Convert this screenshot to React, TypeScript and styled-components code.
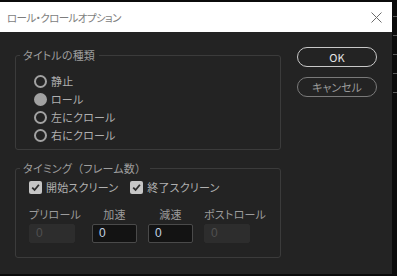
import React from 'react';
import styled, {createGlobalStyle} from "styled-components";

const GlobalStyle = createGlobalStyle`
    html, body {
        margin: 0;
        background: #0b0b0b;
    }
    body {
        font-family: "Noto Sans CJK JP", "Noto Sans", sans-serif;
        font-feature-settings: "palt";
    }
`

type InputCol = { label: string, value: string, width: number, disabled?: boolean, center?: boolean };

const radios = [
    {label: '静止', checked: false},
    {label: 'ロール', checked: true},
    {label: '左にクロール', checked: false},
    {label: '右にクロール', checked: false},
];

const inputs: InputCol[] = [
    {label: 'プリロール', value: '0', width: 63, disabled: true},
    {label: '加速', value: '0', width: 56, center: true},
    {label: '減速', value: '0', width: 56, center: true},
    {label: 'ポストロール', value: '0', width: 60, disabled: true},
];

const CheckMark = () => (
    <svg width="9" height="9" viewBox="0 0 9 9">
        <path d="M1.2 4.6 L3.6 7 L7.9 1.8" fill="none" stroke="#2b2b2b" strokeWidth="1.8"/>
    </svg>
);

export default function App() {
    return (
        <Page>
            <GlobalStyle/>
            <Dialog>
                <TitleBar>
                    <Title>ロール・クロールオプション</Title>
                    <Close>
                        <svg width="11" height="11" viewBox="0 0 11 11">
                            <path d="M0.5 0.5 L10.5 10.5 M10.5 0.5 L0.5 10.5" stroke="#6c6c6c" strokeWidth="1"/>
                        </svg>
                    </Close>
                </TitleBar>

                <Body>
                    <Groups>
                        <Group>
                            <Legend>タイトルの種類</Legend>
                            <RadioList>
                                {radios.map(r => (
                                    <RadioRow key={r.label}>
                                        <Radio $checked={r.checked}/>
                                        <OptionText>{r.label}</OptionText>
                                    </RadioRow>
                                ))}
                            </RadioList>
                        </Group>

                        <Group $timing>
                            <Legend>タイミング<Paren>（</Paren>フレーム数<Paren>）</Paren></Legend>
                            <TimingContent>
                                <CheckRow>
                                    <CheckItem>
                                        <Box><CheckMark/></Box>
                                        <OptionText>開始スクリーン</OptionText>
                                    </CheckItem>
                                    <CheckItem>
                                        <Box><CheckMark/></Box>
                                        <OptionText>終了スクリーン</OptionText>
                                    </CheckItem>
                                </CheckRow>
                                <Fields>
                                    {inputs.map(f => (
                                        <Field key={f.label} $width={f.width}>
                                            <FieldLabel $center={f.center}>{f.label}</FieldLabel>
                                            <NumberBox $disabled={f.disabled}>{f.value}</NumberBox>
                                        </Field>
                                    ))}
                                </Fields>
                            </TimingContent>
                        </Group>
                    </Groups>

                    <Buttons>
                        <Button $primary>OK</Button>
                        <Button>キャンセル</Button>
                    </Buttons>
                </Body>
            </Dialog>
            <Side>
                <Tick/><Tick/><Tick/><Tick/><Tick/>
            </Side>
        </Page>
    );
}

const Page = styled.div`
    display: flex;
    align-items: flex-start;
    width: 397px;
    height: 276px;
    overflow: hidden;
`
const Dialog = styled.div`
    width: 392px;
    height: 272px;
    margin-top: 2px;
    background: #232323;
    display: flex;
    flex-direction: column;
`
const TitleBar = styled.div`
    height: 30px;
    background: #ffffff;
    display: flex;
    align-items: center;
    justify-content: space-between;
    padding: 0 10px 0 7px;
`
const Title = styled.div`
    font-size: 10.5px;
    color: #7d7d7d;
    letter-spacing: -0.6px;
`
const Close = styled.div`
    display: flex;
    width: 11px;
    height: 11px;
`
const Body = styled.div`
    display: flex;
    gap: 16px;
    padding: 0 15px;
`
const Groups = styled.div`
    width: 266px;
    display: flex;
    flex-direction: column;
    gap: 11px;
    padding-top: 16px;
`
const Group = styled.fieldset<{ $timing?: boolean }>`
    margin: 0;
    border: 1px solid #3b3b3b;
    border-radius: 3px;
    padding: ${p => p.$timing ? '5px 0 14px 0' : '10px 0 5px 0'};
    min-width: 0;
`
const Legend = styled.legend`
    margin-left: 4px;
    padding: 0 4px 0 3px;
    font-size: 11px;
    line-height: 14px;
    color: #9e9e9e;
    letter-spacing: 0.2px;
`
const Paren = styled.span`
    font-feature-settings: normal;
`
const RadioList = styled.div`
    display: flex;
    flex-direction: column;
    padding-left: 18px;
`
const RadioRow = styled.div`
    height: 18px;
    display: flex;
    align-items: center;
    gap: 4px;
`
const Radio = styled.span<{ $checked?: boolean }>`
    box-sizing: border-box;
    width: 13px;
    height: 13px;
    border-radius: 50%;
    border: 2px solid #a2a2a2;
    background: ${p => p.$checked ? '#a2a2a2' : 'transparent'};
`
const OptionText = styled.span`
    font-size: 11px;
    line-height: 14px;
    color: #b0b0b0;
    letter-spacing: 0.2px;
`
const TimingContent = styled.div`
    padding-left: 13px;
`
const CheckRow = styled.div`
    display: flex;
    gap: 12px;
`
const CheckItem = styled.div`
    display: flex;
    align-items: center;
    gap: 4px;
    height: 14px;
`
const Box = styled.span`
    width: 13px;
    height: 13px;
    border-radius: 2px;
    background: #c6c6c6;
    display: flex;
    align-items: center;
    justify-content: center;
`
const Fields = styled.div`
    display: flex;
    margin-top: 13px;
`
const Field = styled.div<{ $width: number }>`
    width: ${p => p.$width}px;
    display: flex;
    flex-direction: column;
    gap: 3px;
`
const FieldLabel = styled.div<{ $center?: boolean }>`
    font-size: 11px;
    line-height: 14px;
    color: #9c9c9c;
    letter-spacing: 0.2px;
    white-space: nowrap;
    width: ${p => p.$center ? '45px' : 'auto'};
    text-align: ${p => p.$center ? 'center' : 'left'};
`
const NumberBox = styled.div<{ $disabled?: boolean }>`
    box-sizing: border-box;
    width: ${p => p.$disabled ? '46px' : '45px'};
    height: 19px;
    padding-left: 6px;
    border-radius: 2px;
    font-family: "Liberation Sans", sans-serif;
    font-size: 12px;
    line-height: 17px;
    background: ${p => p.$disabled ? '#2d2d2d' : '#131313'};
    border: 1px solid ${p => p.$disabled ? '#2d2d2d' : '#4a4a4a'};
    color: ${p => p.$disabled ? '#505050' : '#c4d4e4'};
`
const Buttons = styled.div`
    display: flex;
    flex-direction: column;
    gap: 10px;
    padding-top: 15px;
`
const Button = styled.div<{ $primary?: boolean }>`
    box-sizing: border-box;
    width: 80px;
    height: 20px;
    border-radius: 10px;
    border: 1.5px solid ${p => p.$primary ? '#c8c8c8' : '#7a7a7a'};
    color: ${p => p.$primary ? '#e6e6e6' : '#9a9a9a'};
    font-size: 11px;
    display: flex;
    align-items: center;
    justify-content: center;
`
const Side = styled.div`
    flex: 1;
    display: flex;
    flex-direction: column;
    gap: 18px;
    padding-top: 16px;
    align-items: flex-end;
`
const Tick = styled.div`
    width: 4px;
    height: 1px;
    background: #5a5a5a;
`
